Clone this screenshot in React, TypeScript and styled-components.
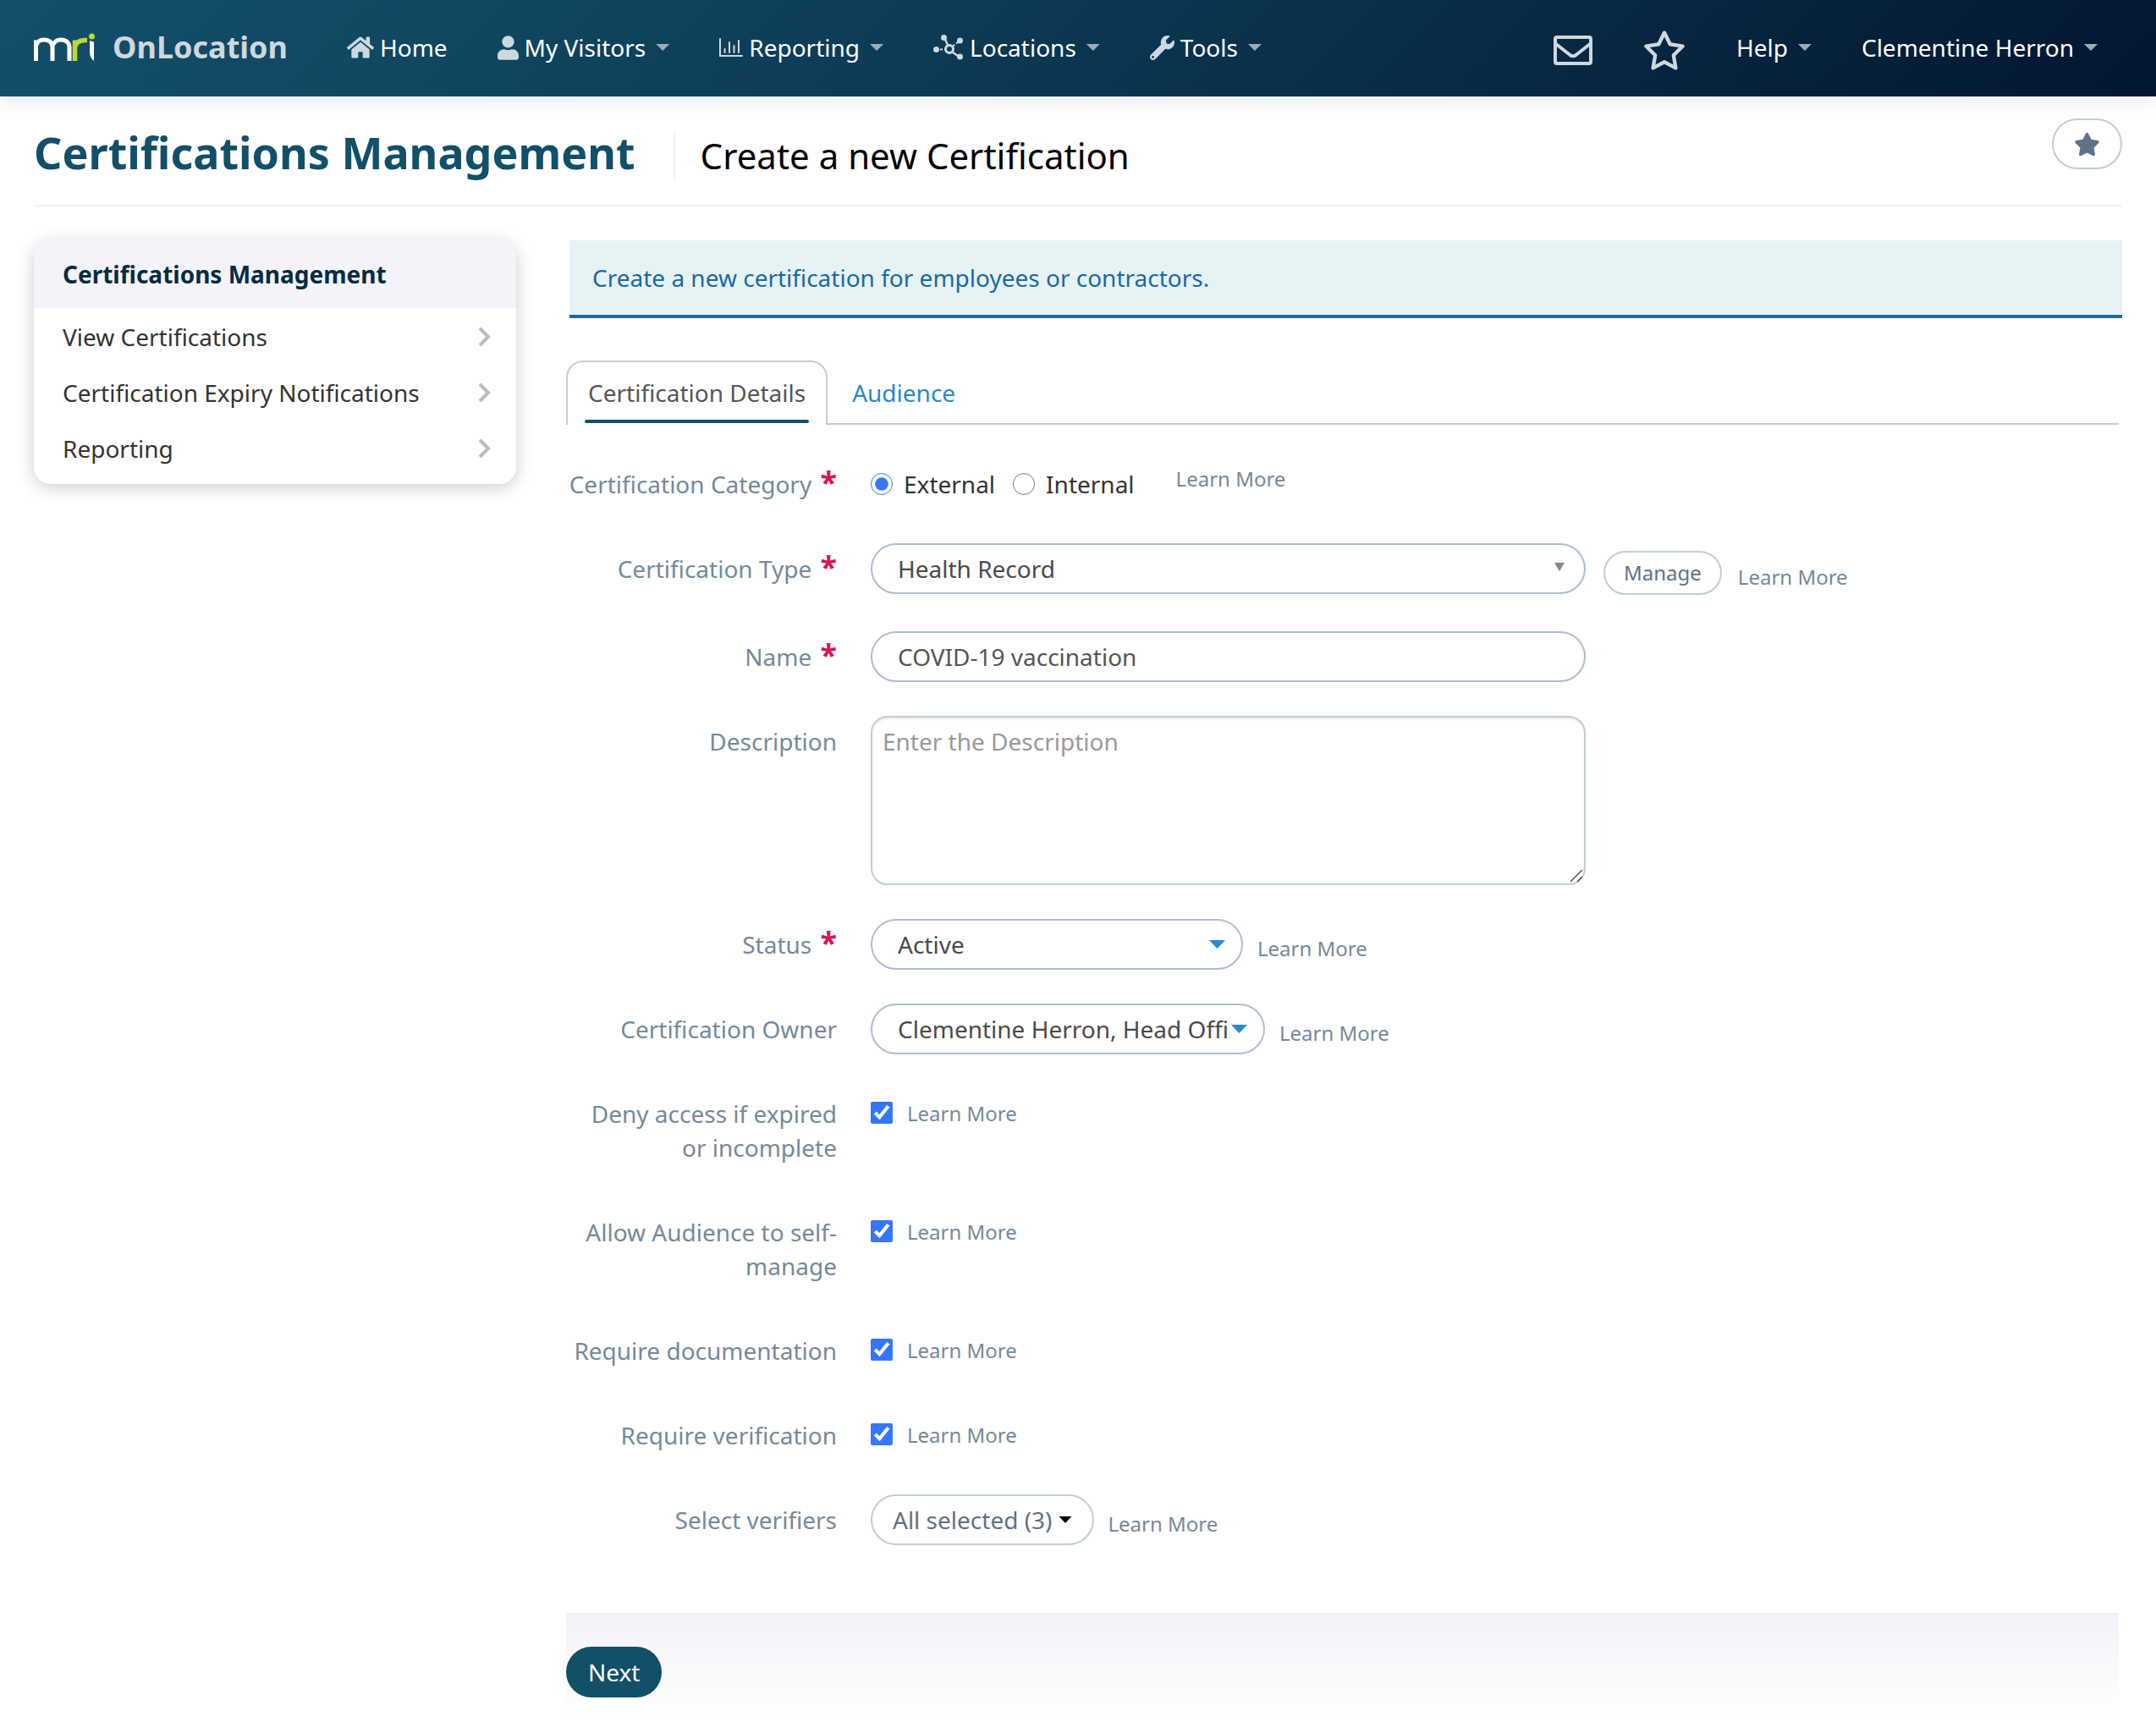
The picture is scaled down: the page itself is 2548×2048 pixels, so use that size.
import React, { useState } from 'react';
import styled, { createGlobalStyle } from 'styled-components';
import { FaHome, FaUser, FaWrench } from 'react-icons/fa';
import { FaRegStar, FaStar } from 'react-icons/fa6';

const color = {
  teal: '#124f69',
  muted: '#75899b',
  slate: '#5f7186',
  line: '#c1cfd1',
  fieldLine: '#afbdd2',
  faint: '#edf3f3',
  link: '#2688d2',
  required: '#d4145a',
  navIcon: '#cdd8df',
};

const GlobalStyle = createGlobalStyle`
  *, *::before, *::after { box-sizing: border-box; }
  body {
    margin: 0;
    background: #fff;
    color: #333;
    font-family: 'Noto Sans', 'Open Sans', sans-serif;
    font-size: 28px;
    line-height: 40px;
  }
  button, input, select, textarea { font: inherit; }
  a { text-decoration: none; }
`;

/* ---------- Top navigation ---------- */

const TopBar = styled.header`
  display: flex;
  align-items: center;
  justify-content: space-between;
  height: 114px;
  padding: 0 69px 2px 40px;
  background: linear-gradient(135deg, #134f6a 0%, #10455f 25%, #0a334e 55%, #031630 100%);
  box-shadow: 0 4px 20px rgba(0, 0, 0, 0.1);
`;

const NavGroup = styled.nav`
  display: flex;
  align-items: center;
  gap: 59px;
`;

const Brand = styled.a`
  display: flex;
  align-items: center;
  gap: 21px;
  margin-right: 11px;
  color: ${color.navIcon};
  font-size: 36px;
  font-weight: 700;
`;

const NavLink = styled.a`
  display: flex;
  align-items: center;
  gap: 7px;
  color: #fff;
  & > svg { color: ${color.navIcon}; flex: none; }
`;

const IconLink = styled(NavLink)`
  padding-top: 6px;
`;

const UserIcon = styled(FaUser)`
  width: 25px;
  height: 29px;
`;

const OutlineStar = styled(FaRegStar)`
  width: 52px;
  height: 47px;
`;

const Caret = styled.span`
  width: 16px;
  height: 8px;
  margin-left: 5px;
  background: #9badb9;
  clip-path: polygon(0 0, 100% 0, 50% 100%);
`;

const MriLogo = () => (
  <svg width="72" height="34" viewBox="0 0 72 34" fill="none" aria-label="mri">
    <path d="M2.5 33V8.5M2.5 15C4 10 7.500 8 12 8c6 0 10 3.500 10 9v16M22 15c2-5 5-7 10-7 6 0 10 3.500 10 9v16" stroke="#fff" strokeWidth="5" />
    <path d="M48.500 33V8.500M48.500 17c1-6 6-9 14.500-8.500" stroke="#bdd631" strokeWidth="5.500" />
    <path d="M66 9l5 1.500V33c-4-3-5-7-5-12z" fill="#fff" />
    <circle cx="68.500" cy="4" r="3.500" fill="#bdd631" />
  </svg>
);

const ChartIcon = () => (
  <svg width="28" height="22" viewBox="0 0 28 22" fill="none" stroke="currentColor" strokeWidth="2" strokeLinecap="round">
    <path d="M1 1v20h26M6.500 13v4M12 5v12M17.500 9v8M23 3v14" />
  </svg>
);

const NodesIcon = () => (
  <svg width="36" height="30" viewBox="0 0 36 30" fill="none" stroke="currentColor">
    <circle cx="19" cy="17" r="4.500" strokeWidth="3" />
    <path d="M13 3.500l4.500 9.500M22.500 20.500L31 26.500" strokeWidth="2.500" />
    <path d="M8 17.500h7M23 13.500l6.500-5" strokeWidth="2" strokeDasharray="3 2" />
    <g fill="currentColor" stroke="none">
      <circle cx="3.500" cy="17.500" r="3.500" />
      <circle cx="12.500" cy="3.500" r="3.500" />
      <circle cx="31.500" cy="7" r="3.500" />
      <circle cx="31.500" cy="26" r="3.500" />
    </g>
  </svg>
);

const MailIcon = () => (
  <svg width="46" height="35" viewBox="0 0 46 35" fill="none" stroke="currentColor" strokeWidth="4" strokeLinejoin="round">
    <rect x="2" y="2" width="42" height="31" rx="2" />
    <path d="M3 10l16.500 13q3.500 2.500 7 0L43 10" />
  </svg>
);

/* ---------- Page heading ---------- */

const PageHeader = styled.div`
  display: flex;
  align-items: flex-start;
  justify-content: space-between;
  margin: 0 40px;
  padding: 26px 0;
  border-bottom: 2px solid ${color.faint};
`;

const Titles = styled.div`
  display: flex;
  align-items: baseline;
  gap: 45px;
  padding-top: 4px;
`;

const Title = styled.h1`
  margin: 0;
  color: ${color.teal};
  font-size: 52px;
  line-height: 72px;
`;

const Subtitle = styled.h2`
  margin: 0;
  padding-left: 30px;
  border-left: 2px solid ${color.faint};
  color: #000;
  font-size: 42px;
  font-weight: 400;
  line-height: 56px;
`;

const PillButton = styled.button<{ $small?: boolean }>`
  display: flex;
  align-items: center;
  justify-content: center;
  gap: 8px;
  height: ${(p) => (p.$small ? 52 : 60)}px;
  padding: 0 ${(p) => (p.$small ? 22 : 24)}px;
  border: 2px solid ${color.line};
  border-radius: 30px;
  background: #fff;
  color: ${color.slate};
  font-size: ${(p) => (p.$small ? 24 : 28)}px;
  line-height: 40px;
  white-space: nowrap;
`;

const BlackCaret = styled.span`
  width: 15px;
  height: 8px;
  background: #000;
  clip-path: polygon(0 0, 100% 0, 50% 100%);
`;

/* ---------- Sidebar ---------- */

const Columns = styled.div`
  display: flex;
  align-items: flex-start;
  gap: 62px;
  padding: 40px 40px 0;
`;

const SideCard = styled.aside`
  flex: none;
  width: 570px;
  overflow: hidden;
  border-radius: 20px;
  background: #fff;
  box-shadow: 0 4px 20px rgba(0, 0, 0, 0.2);
`;

const SideTitle = styled.h3`
  margin: 0;
  padding: 20px 34px;
  background: #f4f3f9;
  color: #042c43;
  font-size: 28px;
  line-height: 40px;
`;

const SideList = styled.ul`
  margin: 0;
  padding: 1px 0 9px;
  list-style: none;
`;

const SideLink = styled.a`
  display: flex;
  align-items: center;
  justify-content: space-between;
  height: 66px;
  padding: 0 30px 0 34px;
  color: #333;
  & > svg { color: #bcbcbc; }
`;

const Chevron = () => (
  <svg width="15" height="24" viewBox="0 0 15 24" fill="none" stroke="currentColor" strokeWidth="4">
    <path d="M2 2l10 10L2 22" />
  </svg>
);

/* ---------- Main column ---------- */

const Main = styled.main`
  flex: 1;
  min-width: 0;
`;

const Notice = styled.div`
  margin-left: 1px;
  padding: 24px 27px;
  border-bottom: 4px solid #1f69a3;
  background: #e6f3f4;
  color: #1b69a3;
`;

const Panel = styled.div`
  margin: 50px 4px 0 -3px;
`;

const Tabs = styled.div`
  display: flex;
  height: 76px;
`;

const TabFill = styled.div`
  flex: 1;
  border-bottom: 2px solid ${color.line};
`;

const Tab = styled.button<{ $active?: boolean }>`
  display: flex;
  flex-direction: column;
  justify-content: space-between;
  padding: ${(p) => (p.$active ? '16px 20px 2px' : '18px 27px 0 29px')};
  border: 2px solid transparent;
  border-color: ${(p) => (p.$active ? `${color.line} ${color.line} transparent` : `transparent transparent ${color.line}`)};
  border-width: ${(p) => (p.$active ? '2px 2px 0' : '0 0 2px')};
  border-radius: ${(p) => (p.$active ? '20px 20px 0 0' : '0')};
  background: none;
  color: ${(p) => (p.$active ? '#555' : color.link)};
`;

const TabText = styled.span`
  padding: 0 4px;
`;

const TabUnderline = styled.span`
  align-self: stretch;
  height: 4px;
  border-radius: 2px;
  background: ${color.teal};
`;

const Form = styled.form`
  display: flex;
  flex-direction: column;
  gap: 40px;
  padding: 40px 0 80px;
`;

const Row = styled.div`
  display: grid;
  grid-template-columns: 320px 1fr;
  column-gap: 40px;
`;

const FieldName = styled.label`
  padding: 10px 0;
  color: ${color.muted};
  text-align: right;
`;

const Asterisk = styled.span`
  margin-left: 3px;
  color: ${color.required};
  font-size: 36px;
  font-weight: 700;
  line-height: 0;
`;

const Field = styled.div`
  display: flex;
  align-items: flex-start;
  column-gap: 17px;
`;

const Inline = styled.div`
  display: flex;
  align-items: center;
  gap: 17px;
  min-height: 60px;
`;

const RadioSet = styled(Inline)`
  gap: 21px;
  margin-right: 32px;
`;

const ManageGroup = styled.div`
  display: flex;
  align-items: center;
  gap: 19px;
  padding: 9px 0 3px 4px;
`;

type LearnPlace = 'raised' | 'level' | 'lowered';

const learnPadding: Record<LearnPlace, number> = { raised: 4, level: 0, lowered: 10 };

const Learn = styled.a<{ $at: LearnPlace }>`
  align-self: ${(p) => (p.$at === 'raised' ? 'flex-start' : 'center')};
  padding-top: ${(p) => learnPadding[p.$at]}px;
  color: ${color.muted};
  font-size: 24px;
  white-space: nowrap;
`;

const Choice = styled.label`
  display: flex;
  align-items: center;
  gap: 13px;
`;

const Tick = styled.input`
  flex: none;
  width: 26px;
  height: 26px;
  margin: 0;
  accent-color: #3576ff;
`;

const TickSlot = styled.span`
  display: flex;
  padding-bottom: 2px;
`;

const TextInput = styled.input`
  width: 845px;
  height: 60px;
  padding: 0 30px;
  border: 2px solid ${color.fieldLine};
  border-radius: 30px;
  background: #fff;
  color: #555;
`;

const TextAreaShell = styled.div`
  position: relative;
  width: 845px;
`;

const TextArea = styled.textarea`
  display: block;
  width: 100%;
  height: 200px;
  padding: 8px 12px;
  border: 2px solid ${color.line};
  border-radius: 20px;
  background: #fff;
  color: #555;
  line-height: 40px;
  resize: none;
  box-shadow: inset 0 2px 2px rgba(0, 0, 0, 0.08);
  &::placeholder { color: #999; opacity: 1; }
`;

const Grip = styled.svg`
  position: absolute;
  right: 3px;
  bottom: 3px;
  pointer-events: none;
`;

const SelectShell = styled.div<{ $width: number }>`
  position: relative;
  flex: none;
  width: ${(p) => p.$width}px;
`;

const Select = styled.select`
  display: block;
  width: 100%;
  height: 60px;
  padding: 0 42px 0 30px;
  border: 2px solid ${color.fieldLine};
  border-radius: 30px;
  background: #fff;
  color: #4a4a4a;
  appearance: none;
`;

const SelectArrow = styled.span<{ $grey?: boolean }>`
  position: absolute;
  top: ${(p) => (p.$grey ? 23 : 25)}px;
  right: ${(p) => (p.$grey ? 25 : 21)}px;
  width: ${(p) => (p.$grey ? 12 : 19)}px;
  height: 10px;
  background: ${(p) => (p.$grey ? '#888' : color.link)};
  clip-path: polygon(0 0, 100% 0, 50% 100%);
  pointer-events: none;
`;

const FormFooter = styled.div`
  height: 126px;
  padding-top: 38px;
  border-top: 2px solid ${color.faint};
  background: linear-gradient(#f3f2f8, #fff);
`;

const NextButton = styled.button`
  height: 60px;
  padding: 0 26px;
  border: 0;
  border-radius: 30px;
  background: ${color.teal};
  color: #fff;
`;

const Required = () => <Asterisk aria-hidden="true">*</Asterisk>;

const LearnMore = ({ at = 'level' }: { at?: LearnPlace }) => (
  <Learn href="#" $at={at}>Learn More</Learn>
);

const toggles = [
  { id: 'deny', label: 'Deny access if expired or incomplete' },
  { id: 'self-manage', label: 'Allow Audience to self-manage' },
  { id: 'documentation', label: 'Require documentation' },
  { id: 'verification', label: 'Require verification' },
];

export default function App() {
  const [category, setCategory] = useState('External');

  return (
    <>
      <GlobalStyle />
      <TopBar>
        <NavGroup>
          <Brand href="#"><MriLogo />OnLocation</Brand>
          <NavLink href="#"><FaHome size={32} />Home</NavLink>
          <NavLink href="#"><UserIcon />My Visitors<Caret /></NavLink>
          <NavLink href="#"><ChartIcon />Reporting<Caret /></NavLink>
          <NavLink href="#"><NodesIcon />Locations<Caret /></NavLink>
          <NavLink href="#"><FaWrench size={29} />Tools<Caret /></NavLink>
        </NavGroup>
        <NavGroup>
          <IconLink href="#" aria-label="Messages"><MailIcon /></IconLink>
          <IconLink href="#" aria-label="Favourites"><OutlineStar /></IconLink>
          <NavLink href="#">Help<Caret /></NavLink>
          <NavLink href="#">Clementine Herron<Caret /></NavLink>
        </NavGroup>
      </TopBar>

      <PageHeader>
        <Titles>
          <Title>Certifications Management</Title>
          <Subtitle>Create a new Certification</Subtitle>
        </Titles>
        <PillButton type="button" aria-label="Add to favourites"><FaStar size={31} /></PillButton>
      </PageHeader>

      <Columns>
        <SideCard>
          <SideTitle>Certifications Management</SideTitle>
          <SideList>
            {['View Certifications', 'Certification Expiry Notifications', 'Reporting'].map((item) => (
              <li key={item}><SideLink href="#">{item}<Chevron /></SideLink></li>
            ))}
          </SideList>
        </SideCard>

        <Main>
          <Notice>Create a new certification for employees or contractors.</Notice>
          <Panel>
            <Tabs role="tablist">
              <Tab type="button" role="tab" aria-selected="true" $active>
                <TabText>Certification Details</TabText>
                <TabUnderline />
              </Tab>
              <Tab type="button" role="tab" aria-selected="false">Audience</Tab>
              <TabFill />
            </Tabs>

            <Form onSubmit={(e) => e.preventDefault()}>
              <Row>
                <FieldName as="span" id="category-label">Certification Category <Required /></FieldName>
                <Field>
                  <RadioSet role="radiogroup" aria-labelledby="category-label">
                    {['External', 'Internal'].map((value) => (
                      <Choice key={value}>
                        <Tick type="radio" name="category" checked={category === value} onChange={() => setCategory(value)} />
                        {value}
                      </Choice>
                    ))}
                  </RadioSet>
                  <LearnMore at="raised" />
                </Field>
              </Row>

              <Row>
                <FieldName htmlFor="type">Certification Type <Required /></FieldName>
                <Field>
                  <SelectShell $width={845}>
                    <Select id="type"><option>Health Record</option></Select>
                    <SelectArrow $grey />
                  </SelectShell>
                  <ManageGroup>
                    <PillButton type="button" $small>Manage</PillButton>
                    <LearnMore at="lowered" />
                  </ManageGroup>
                </Field>
              </Row>

              <Row>
                <FieldName htmlFor="name">Name <Required /></FieldName>
                <Field><TextInput id="name" defaultValue="COVID-19 vaccination" /></Field>
              </Row>

              <Row>
                <FieldName htmlFor="description">Description</FieldName>
                <Field>
                  <TextAreaShell>
                    <TextArea id="description" placeholder="Enter the Description" />
                    <Grip width="15" height="15" viewBox="0 0 15 15" stroke="#555" strokeWidth="1.500">
                      <path d="M0 14L14 0M8 14l6-6" />
                    </Grip>
                  </TextAreaShell>
                </Field>
              </Row>

              <Row>
                <FieldName htmlFor="status">Status <Required /></FieldName>
                <Field>
                  <SelectShell $width={440}>
                    <Select id="status"><option>Active</option></Select>
                    <SelectArrow />
                  </SelectShell>
                  <LearnMore at="lowered" />
                </Field>
              </Row>

              <Row>
                <FieldName htmlFor="owner">Certification Owner</FieldName>
                <Field>
                  <SelectShell $width={466}>
                    <Select id="owner"><option>Clementine Herron, Head Office</option></Select>
                    <SelectArrow />
                  </SelectShell>
                  <LearnMore at="lowered" />
                </Field>
              </Row>

              {toggles.map((t) => (
                <Row key={t.id}>
                  <FieldName htmlFor={t.id}>{t.label}</FieldName>
                  <Field>
                    <Inline>
                      <TickSlot><Tick id={t.id} type="checkbox" defaultChecked /></TickSlot>
                      <LearnMore />
                    </Inline>
                  </Field>
                </Row>
              ))}

              <Row>
                <FieldName htmlFor="verifiers">Select verifiers</FieldName>
                <Field>
                  <PillButton type="button" id="verifiers">All selected (3)<BlackCaret /></PillButton>
                  <LearnMore at="lowered" />
                </Field>
              </Row>
            </Form>

            <FormFooter>
              <NextButton type="button">Next</NextButton>
            </FormFooter>
          </Panel>
        </Main>
      </Columns>
    </>
  );
}
